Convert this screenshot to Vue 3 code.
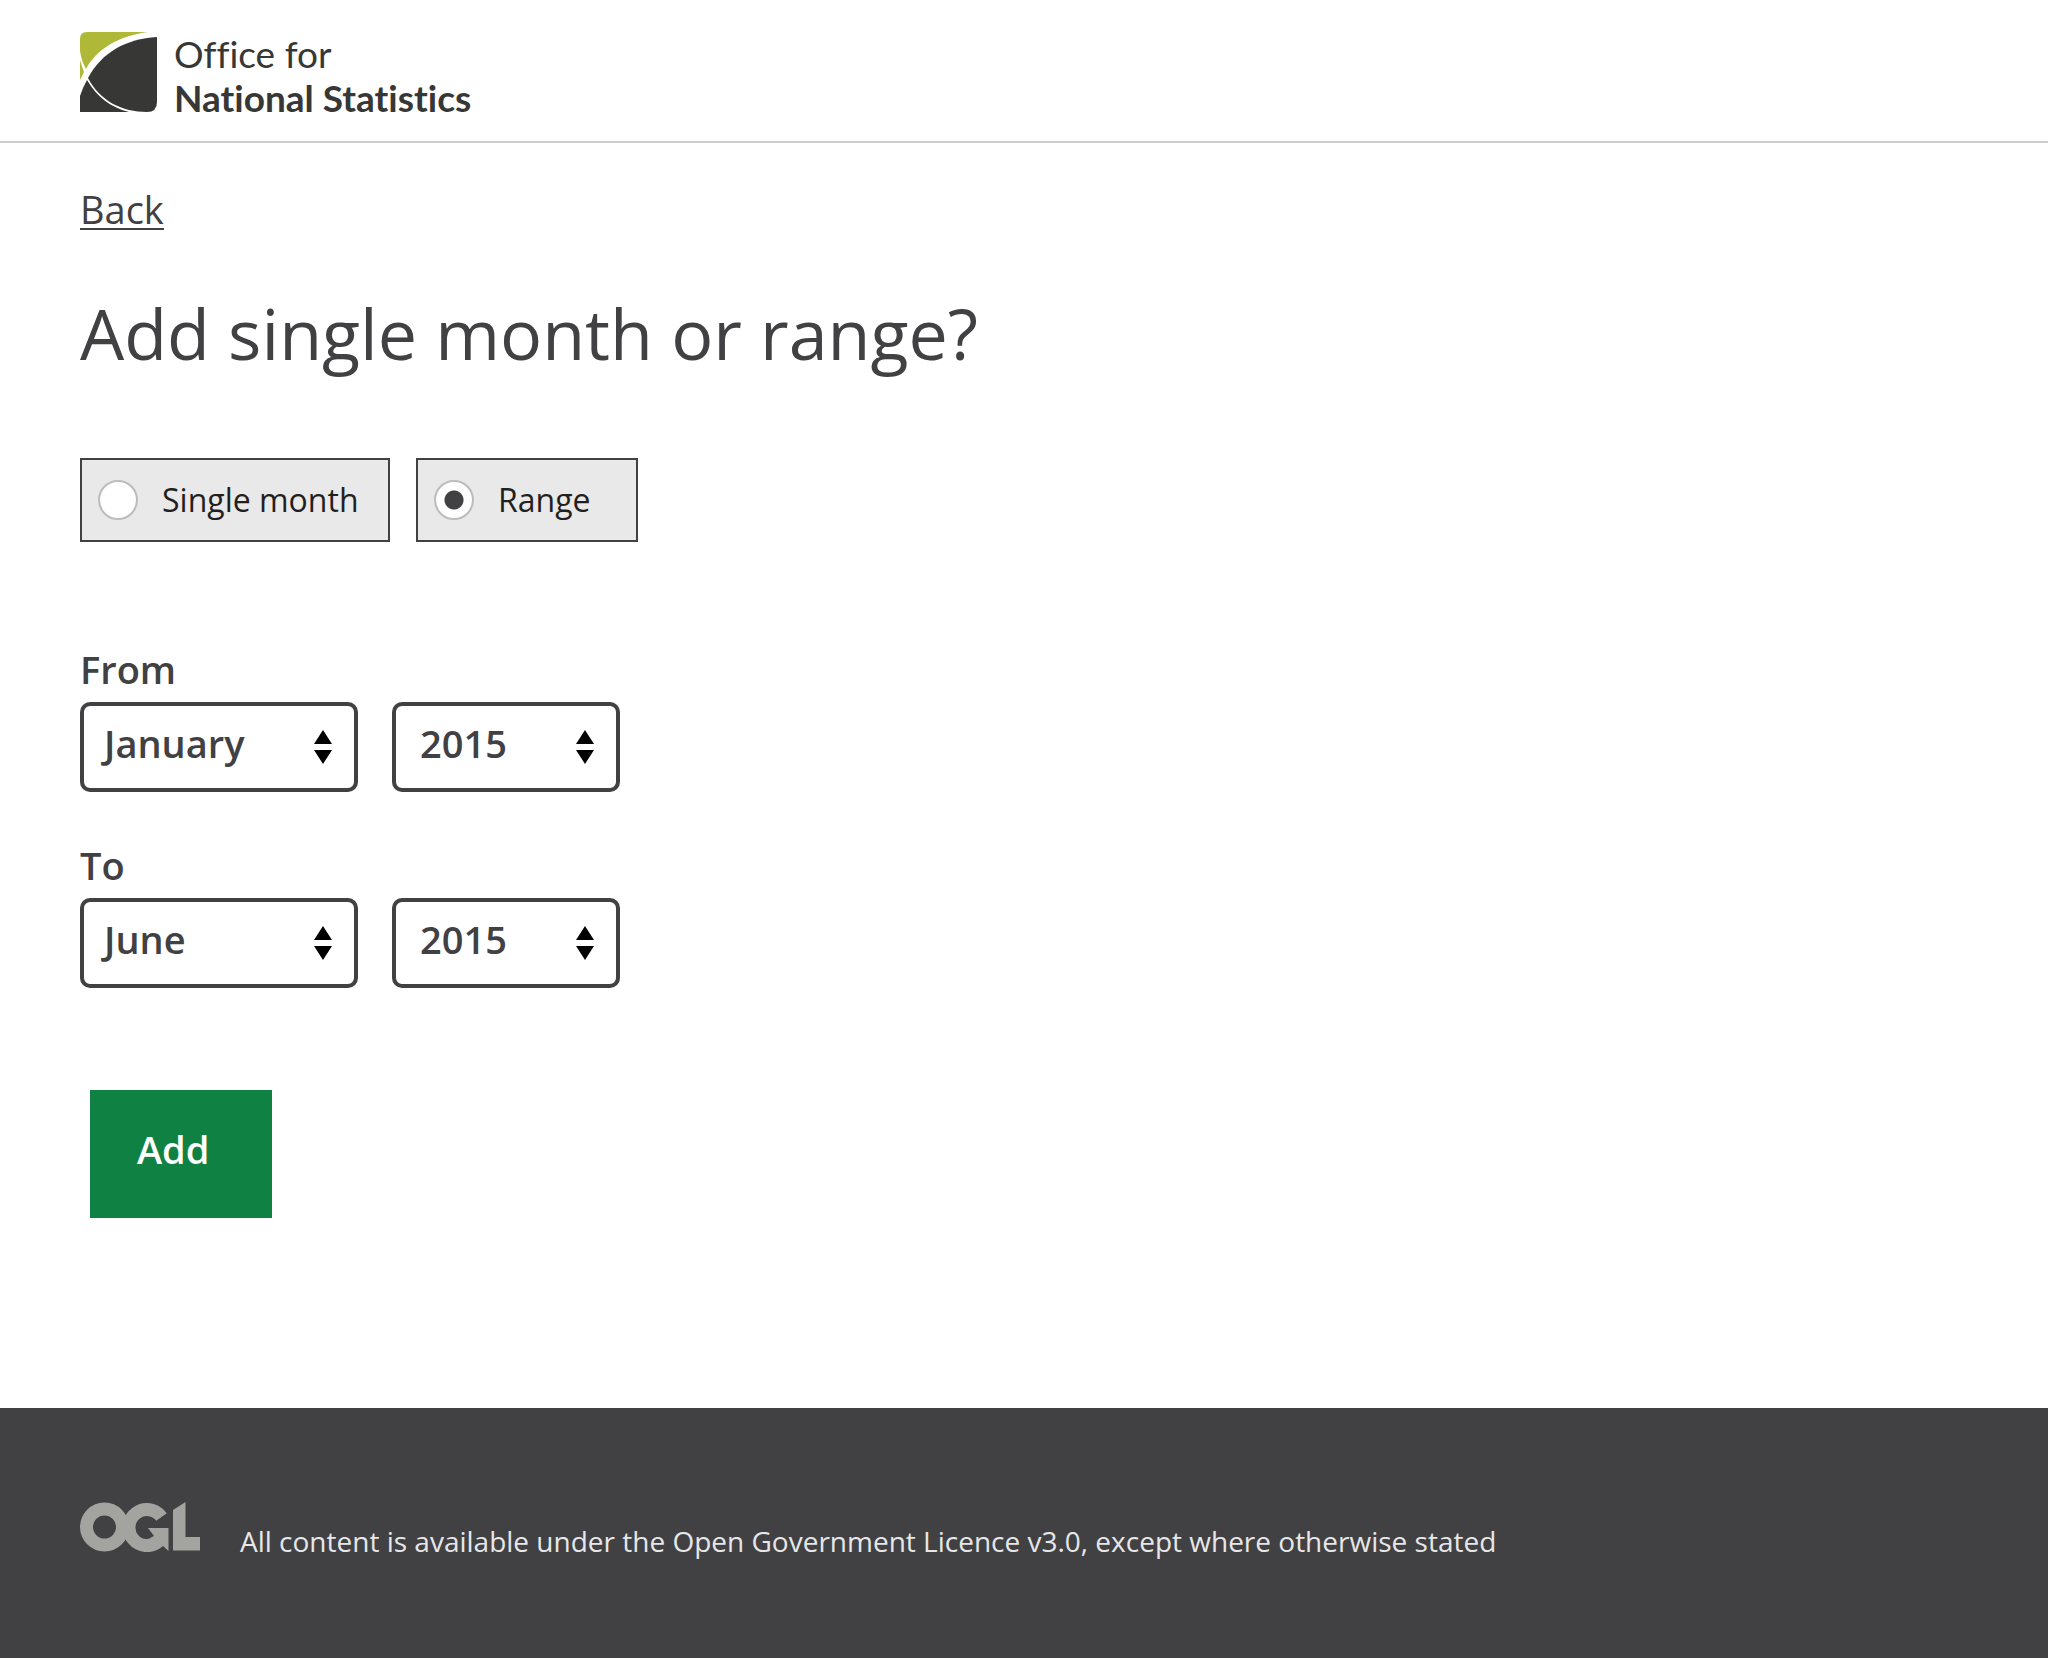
<script setup>
import { ref } from 'vue'

const months = [
  'January', 'February', 'March', 'April', 'May', 'June',
  'July', 'August', 'September', 'October', 'November', 'December',
]
const years = ['2012', '2013', '2014', '2015', '2016', '2017']

const modes = [
  { value: 'single', label: 'Single month' },
  { value: 'range', label: 'Range' },
]
const mode = ref('range')

const periods = ref([
  { id: 'from', label: 'From', month: 'January', year: '2015' },
  { id: 'to', label: 'To', month: 'June', year: '2015' },
])
</script>

<template>
  <div class="page">
    <header class="header">
      <a class="brand" href="#">
        <svg class="brand-mark" viewBox="0 0 77 80" aria-hidden="true">
          <path fill="#afb937" d="M7 0H68C38 4 17 17 6 37C3 32 1 26 0 19V7Q0 0 7 0Z" />
          <path fill="#afb937" d="M0 28Q2 35 4 40L0 48Z" />
          <path fill="#373735" d="M77 5V70Q77 80 67 80C42 80 20 69 8 46C22 20 46 7 77 5Z" />
          <path fill="#373735" d="M0 64Q3 55 7 48C17 65 30 75 49 80H0Z" />
        </svg>
        <span class="brand-name">
          <span>Office for</span>
          <strong>National Statistics</strong>
        </span>
      </a>
    </header>

    <main class="main">
      <a class="back" href="#">Back</a>
      <h1 class="title">Add single month or range?</h1>

      <form @submit.prevent>
        <div class="modes" role="radiogroup" aria-label="Period type">
          <label v-for="m in modes" :key="m.value" class="mode" :class="m.value">
            <input v-model="mode" type="radio" name="mode" :value="m.value" />
            <span>{{ m.label }}</span>
          </label>
        </div>

        <div v-for="p in periods" :key="p.id" class="period">
          <label class="period-label" :for="p.id + '-month'">{{ p.label }}</label>
          <div class="selects">
            <div class="select month">
              <select :id="p.id + '-month'" v-model="p.month">
                <option v-for="m in months" :key="m">{{ m }}</option>
              </select>
              <svg class="arrows" viewBox="0 0 18 34" aria-hidden="true">
                <path d="M9 0L18 14H0ZM0 20H18L9 34Z" />
              </svg>
            </div>
            <div class="select year">
              <select :id="p.id + '-year'" v-model="p.year" :aria-label="p.label + ' year'">
                <option v-for="y in years" :key="y">{{ y }}</option>
              </select>
              <svg class="arrows" viewBox="0 0 18 34" aria-hidden="true">
                <path d="M9 0L18 14H0ZM0 20H18L9 34Z" />
              </svg>
            </div>
          </div>
        </div>

        <button class="add" type="submit">Add</button>
      </form>
    </main>

    <footer class="footer">
      <svg class="ogl" viewBox="0 0 120 50" role="img" aria-label="Open Government Licence">
        <g fill="none" stroke="#a3a3a0" stroke-width="13">
          <circle cx="24.5" cy="25" r="18" />
          <path d="M81.500 15A18 18 0 1 0 79 39" />
        </g>
        <path fill="#a3a3a0" d="M68 26H88.500V49L82 43L70 36L74 34Z" />
        <path fill="#a3a3a0" d="M93 8L105.500 0V35H120V48.500H93Z" />
      </svg>
      <p class="licence">
        All content is available under the Open Government Licence v3.0, except where otherwise stated
      </p>
    </footer>
  </div>
</template>

<style>
body {
  margin: 0;
  background: #fff;
}
</style>

<style scoped>
.page {
  display: flex;
  flex-direction: column;
  min-height: 100vh;
  color: #414042;
  font-family: "Open Sans", "Noto Sans", sans-serif;
  font-size: 38px;
  line-height: 52px;
}

.page *,
.page {
  box-sizing: border-box;
}

.header {
  padding: 32px 80px 21px;
  border-bottom: 2px solid #ccc;
}

.brand {
  display: flex;
  gap: 17px;
  width: fit-content;
  color: #373735;
  text-decoration: none;
}

.brand-mark {
  width: 77px;
  height: 80px;
}

.brand-name {
  display: flex;
  flex-direction: column;
  font-family: "Lato", sans-serif;
  font-size: 37px;
  font-variant-ligatures: none;
  line-height: 44px;
}

.main {
  flex: 1;
  padding: 47px 80px 190px;
}

.back {
  display: block;
  width: fit-content;
  border-bottom: 2px solid #414042;
  color: inherit;
  line-height: 38px;
  text-decoration: none;
}

.title {
  margin: 55px 0 77px;
  font-size: 70px;
  font-weight: 400;
  line-height: 96px;
}

.modes {
  display: flex;
  gap: 26px;
  margin-bottom: 101px;
}

.mode {
  display: flex;
  align-items: center;
  gap: 24px;
  height: 84px;
  padding: 0 16px;
  border: 2px solid #414042;
  background: #e9e9e9;
  color: #231f20;
  font-size: 32px;
  white-space: nowrap;
}

.mode.single {
  width: 310px;
}

.mode.range {
  width: 222px;
}

.mode input {
  flex: none;
  width: 40px;
  height: 40px;
  margin: 0;
  border: 2px solid #bcbcbc;
  border-radius: 50%;
  appearance: none;
  background: #fff;
}

.mode input:checked {
  background: radial-gradient(circle, #414042 9px, #fff 10px);
}

.period {
  margin-bottom: 47px;
}

.period-label {
  display: block;
  margin-bottom: 7px;
  font-weight: 600;
}

.selects {
  display: flex;
  gap: 34px;
}

.select {
  position: relative;
}

.month {
  width: 278px;
}

.year {
  width: 228px;
}

.select select {
  display: block;
  width: 100%;
  height: 90px;
  padding: 0 48px 8px 8px;
  border: 4px solid #414042;
  border-radius: 10px;
  appearance: none;
  background: #fff;
  color: inherit;
  font: inherit;
  font-weight: 600;
  text-indent: 12px;
}

.year select {
  text-indent: 16px;
}

.arrows {
  position: absolute;
  top: 28px;
  right: 26px;
  width: 18px;
  height: 34px;
  pointer-events: none;
}

.add {
  display: block;
  width: 182px;
  height: 128px;
  margin: 102px 0 0 10px;
  padding: 0 47px 10px;
  border: 0;
  background: #0f8243;
  color: #fff;
  font: inherit;
  font-weight: 600;
  text-align: left;
}

.footer {
  display: flex;
  align-items: flex-start;
  gap: 40px;
  padding: 94px 80px 106px;
  background: #414042;
}

.ogl {
  flex: none;
  width: 120px;
  height: 50px;
}

.licence {
  margin: 19px 0 0;
  color: #e6e7e8;
  font-size: 28px;
  line-height: 40px;
}
</style>
